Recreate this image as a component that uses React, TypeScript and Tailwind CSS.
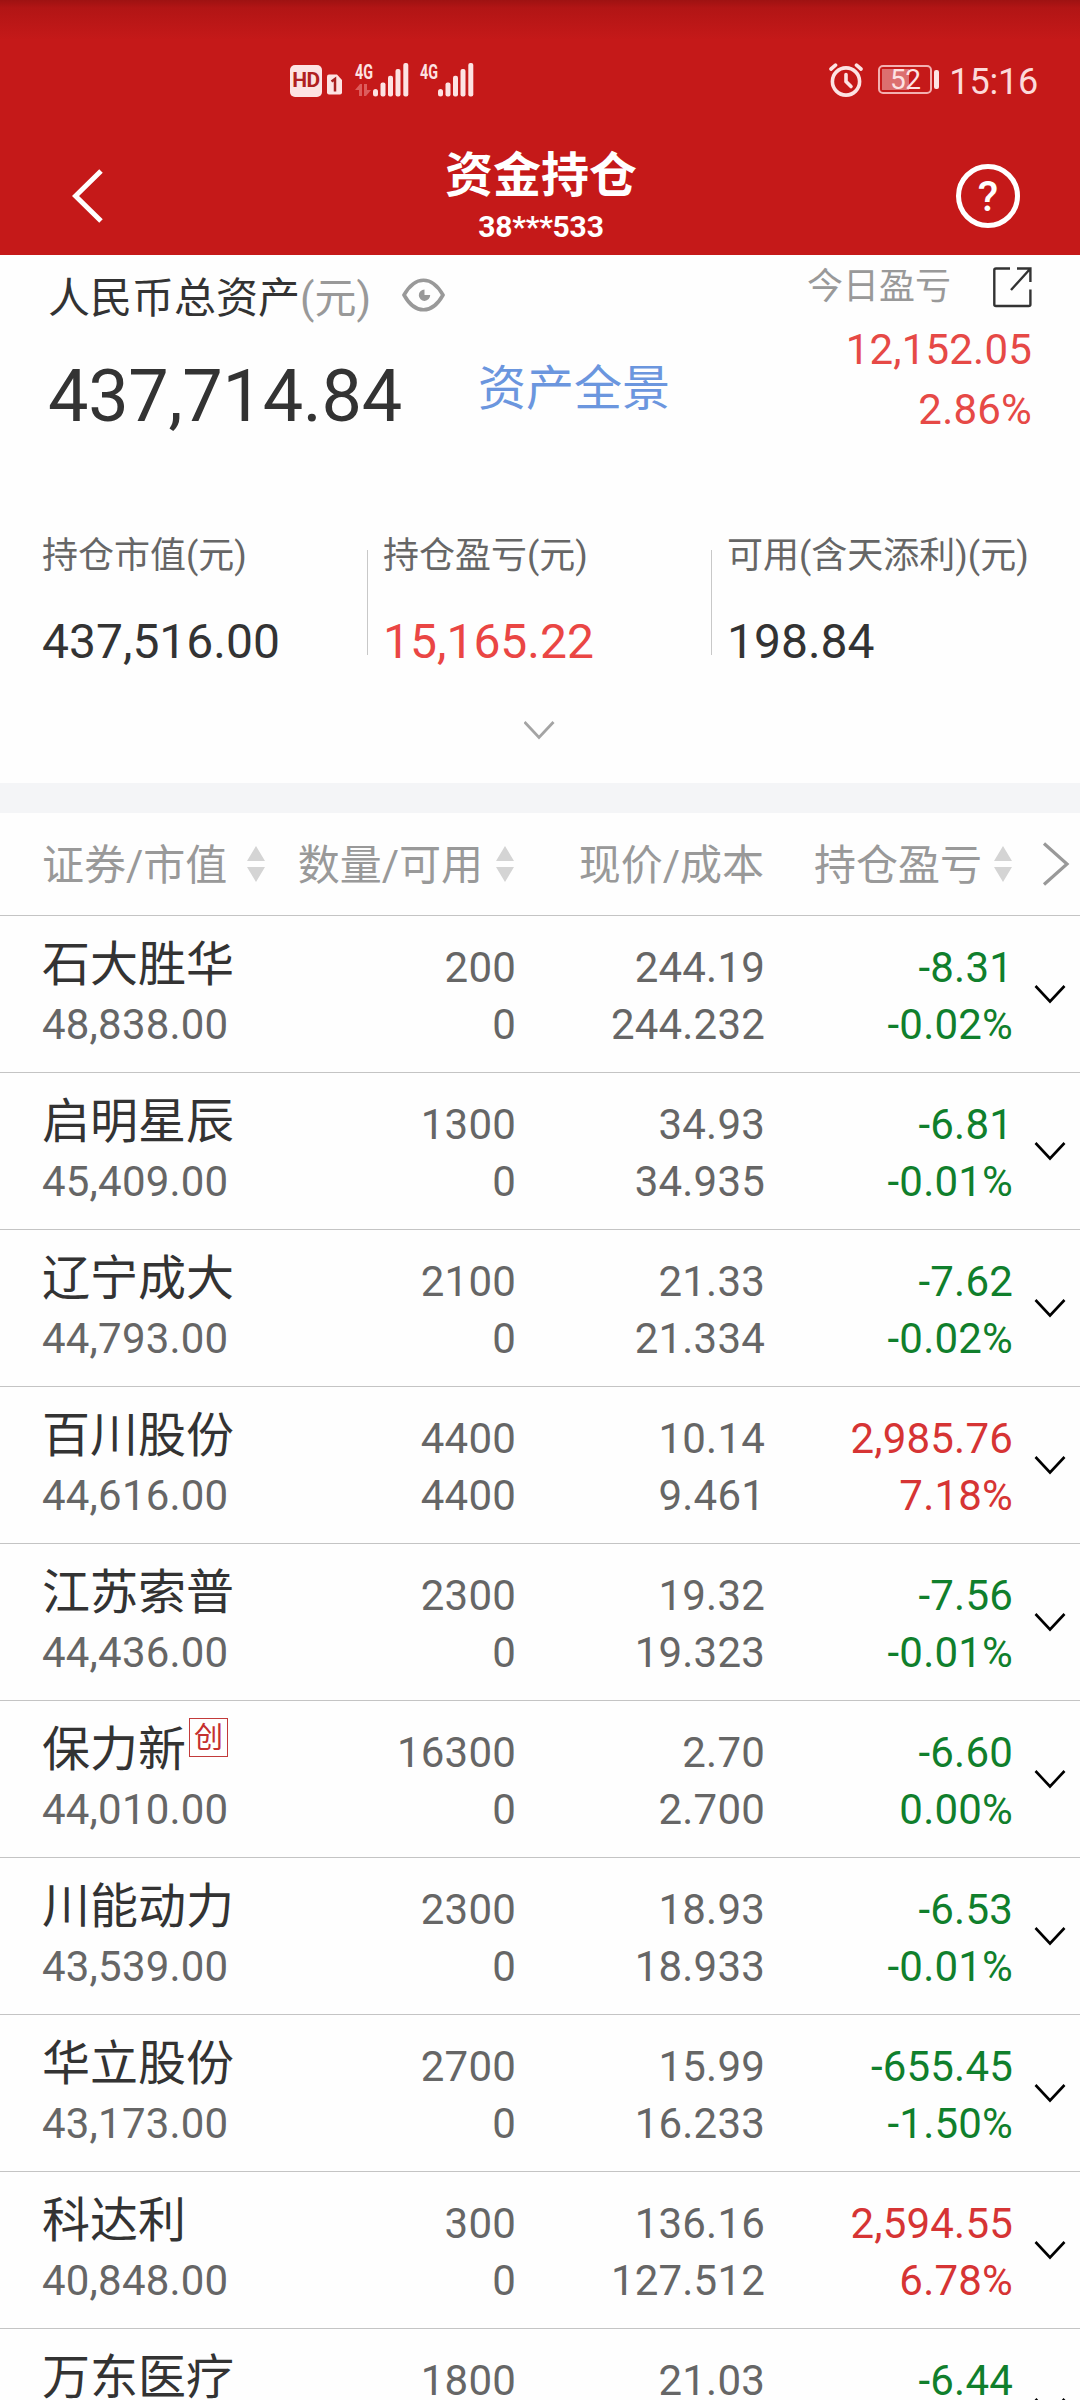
import type { ReactNode } from "react";

interface Holding {
  name: string;
  tag?: string;
  marketValue: string;
  quantity: string;
  available: string;
  price: string;
  cost: string;
  profit: string;
  profitRate: string;
  trend: "up" | "down";
}

const holdings: Holding[] = [
  { name: "石大胜华", marketValue: "48,838.00", quantity: "200", available: "0", price: "244.19", cost: "244.232", profit: "-8.31", profitRate: "-0.02%", trend: "down" },
  { name: "启明星辰", marketValue: "45,409.00", quantity: "1300", available: "0", price: "34.93", cost: "34.935", profit: "-6.81", profitRate: "-0.01%", trend: "down" },
  { name: "辽宁成大", marketValue: "44,793.00", quantity: "2100", available: "0", price: "21.33", cost: "21.334", profit: "-7.62", profitRate: "-0.02%", trend: "down" },
  { name: "百川股份", marketValue: "44,616.00", quantity: "4400", available: "4400", price: "10.14", cost: "9.461", profit: "2,985.76", profitRate: "7.18%", trend: "up" },
  { name: "江苏索普", marketValue: "44,436.00", quantity: "2300", available: "0", price: "19.32", cost: "19.323", profit: "-7.56", profitRate: "-0.01%", trend: "down" },
  { name: "保力新", tag: "创", marketValue: "44,010.00", quantity: "16300", available: "0", price: "2.70", cost: "2.700", profit: "-6.60", profitRate: "0.00%", trend: "down" },
  { name: "川能动力", marketValue: "43,539.00", quantity: "2300", available: "0", price: "18.93", cost: "18.933", profit: "-6.53", profitRate: "-0.01%", trend: "down" },
  { name: "华立股份", marketValue: "43,173.00", quantity: "2700", available: "0", price: "15.99", cost: "16.233", profit: "-655.45", profitRate: "-1.50%", trend: "down" },
  { name: "科达利", marketValue: "40,848.00", quantity: "300", available: "0", price: "136.16", cost: "127.512", profit: "2,594.55", profitRate: "6.78%", trend: "up" },
  { name: "万东医疗", marketValue: "", quantity: "1800", available: "", price: "21.03", cost: "", profit: "-6.44", profitRate: "", trend: "down" },
];

const SignalIcon = ({ showData }: { showData?: boolean }) => (
  <svg className="overflow-visible" width="54" height="40" viewBox="0 -6 54 40" fill="#fde3e3">
    <text x="0" y="15.5" fontSize="20.500" fontWeight="700" textLength="18" lengthAdjust="spacingAndGlyphs">
      4G
    </text>
    {showData && (
      <path d="M0 27L5 21H7V33H4V27ZM9 21H12V27H16L11 33H9Z" fill="#dd5c5c" />
    )}
    <rect x="18" y="26" width="5" height="7.5" rx="2.5" />
    <rect x="25.5" y="19.5" width="5" height="14" rx="2" />
    <rect x="33" y="12.7" width="5" height="20.8" rx="2" />
    <rect x="40.5" y="6" width="5" height="27.5" rx="2" />
    <rect x="48.3" y="0" width="5" height="33.5" rx="2" />
  </svg>
);

const StatusBar = () => (
  <div className="flex h-[97px] items-end justify-between pr-[42px] pl-[290px]">
    <div className="flex items-end">
      <div className="flex h-8 w-8 items-center justify-center rounded-[5px] bg-[#fde3e3] text-[21px] font-bold tracking-[-0.5px] text-[#b02020]">
        HD
      </div>
      <svg className="mb-[2px] ml-[5px]" width="15" height="21" viewBox="0 0 15 21">
        <path d="M2 0.500H10L15 6V18.500Q15 20.500 13 20.500H2Q0 20.500 0 18.500V2.500Q0 0.500 2 0.500Z" fill="#fde3e3" />
        <path d="M4.500 7.500L8 5V17.500" fill="none" stroke="#a82020" strokeWidth="2.500" />
      </svg>
      <div className="ml-[13px] flex gap-[11px]">
        <SignalIcon showData />
        <SignalIcon />
      </div>
    </div>
    <div className="flex items-end">
      <svg width="34" height="34" viewBox="0 0 34 34" fill="none" stroke="#fde3e3" strokeLinecap="round">
        <circle cx="17" cy="18.500" r="13.600" strokeWidth="3.600" />
        <path d="M2 6L6.500 2.200M32 6L27.500 2.200" strokeWidth="3.600" />
        <path d="M17 11.500V18.500L22 23.500" strokeWidth="3.600" />
      </svg>
      <div className="mb-[3px] ml-[15px] flex items-center gap-[2px]">
        <div className="relative flex h-[29px] w-[54px] items-center justify-center rounded-[5px] border-2 border-[#f3b0b0]">
          <div className="absolute top-[2px] left-[2px] h-[21px] w-[27px] bg-[#dc6f6f]" />
          <span className="relative text-[28px] leading-[25px] tracking-[-0.5px] text-[#fde3e3]">52</span>
        </div>
        <div className="h-[19px] w-[5px] rounded-[2px] bg-[#fde3e3]" />
      </div>
      <span className="mb-[-4px] ml-[10px] text-[36px] leading-[37px] tracking-[-0.2px] text-[#fcdada]">15:16</span>
    </div>
  </div>
);

const Header = () => (
  <header className="h-[255px] shrink-0 bg-[#c51919] bg-[linear-gradient(to_bottom,#9e1212_0px,#b21515_8px,#c51919_40px)] text-white">
    <StatusBar />
    <div className="flex h-[158px] items-start justify-between pr-[60px] pl-[72px]">
      <svg className="mt-[72px]" width="32" height="54" viewBox="0 0 32 54" fill="none" stroke="currentColor" strokeWidth="5">
        <path d="M29 2L3.500 27L29 52" />
      </svg>
      <div className="mt-[49px] ml-[22px] text-center font-bold">
        <h1 className="text-[48px] leading-[60px]">资金持仓</h1>
        <p className="mt-[3px] text-[30px] leading-[36px] tracking-[-0.2px]">38***533</p>
      </div>
      <div className="mt-[67px] flex h-16 w-16 items-center justify-center rounded-full border-[5px] border-white text-[42px] font-medium">
        ?
      </div>
    </div>
  </header>
);

const Summary = () => (
  <section className="h-[528px] shrink-0">
    <div className="flex h-[277px] justify-between pr-[48px] pl-[48px]">
      <div className="pt-[19px]">
        <div className="flex items-start">
          <span className="text-[42px] leading-[50px] text-[#333]">
            人民币总资产<span className="text-[#999]">(元)</span>
          </span>
          <svg className="mt-[4px] ml-[31px]" width="43" height="34" viewBox="0 0 43 34">
            <path d="M2 17C6.500 9 13 2.200 21.500 2.200S36.500 9 41 17C36.500 25 30 31.800 21.500 31.800S6.500 25 2 17Z" fill="none" stroke="#999" strokeWidth="3.600" />
            <path d="M22.500 17V11.500A5.700 5.700 0 1 0 28.200 17Z" fill="#999" />
          </svg>
        </div>
        <div className="mt-[33px] flex items-start">
          <span className="text-[72px] leading-[80px] tracking-[-0.3px] text-[#333]">437,714.84</span>
          <span className="mt-[2px] ml-[76px] text-[48px] leading-[60px] text-[#6b96de]">资产全景</span>
        </div>
      </div>
      <div className="pt-[11px] text-right">
        <div className="flex items-start justify-end">
          <span className="mt-px text-[36px] leading-10 text-[#999]">今日盈亏</span>
          <svg className="mt-px ml-[42px]" width="39" height="41" viewBox="0 0 39 41" fill="none" stroke="#333" strokeWidth="2.400">
            <path d="M17 1.500H3Q1.300 1.500 1.300 3V37.500Q1.300 39 3 39H35.700Q37.400 39 37.400 37.500V22.500" />
            <path d="M24 1.500H37.400V15M37 2L18 23" />
          </svg>
        </div>
        <div className="mt-[12px] text-[42px] leading-[60px] tracking-[0.2px] text-[#e64946]">
          <p>12,152.05</p>
          <p>2.86%</p>
        </div>
      </div>
    </div>
    <div className="flex">
      <SummaryItem label="持仓市值(元)" value="437,516.00" className="w-[367px] pl-[42px] text-[#333]" />
      <div className="mt-[18px] h-[105px] w-px bg-[#c8c8c8]" />
      <SummaryItem label="持仓盈亏(元)" value="15,165.22" className="w-[343px] pl-[15px] text-[#ea4644]" />
      <div className="mt-[18px] h-[105px] w-px bg-[#c8c8c8]" />
      <SummaryItem label="可用(含天添利)(元)" value="198.84" className="pl-[15px] text-[#333]" />
    </div>
    <svg className="mx-auto mt-[48px]" width="32" height="20" viewBox="0 0 32 20" fill="none" stroke="#a4a4a4" strokeWidth="2.800">
      <path d="M0.500 2L15 17.500L29.500 2" />
    </svg>
  </section>
);

const SummaryItem = ({ label, value, className }: { label: string; value: string; className: string }) => (
  <div className={`whitespace-nowrap ${className}`}>
    <p className="text-[36px] leading-[48px] text-[#666]">{label}</p>
    <p className="mt-[32px] text-[48px] leading-[60px]">{value}</p>
  </div>
);

const SortIcon = () => (
  <svg className="shrink-0" width="18" height="36" viewBox="0 0 18 36" fill="#d4d4d4">
    <path d="M9 0L18 15H0ZM9 36L18 21H0Z" />
  </svg>
);

const ColumnTitle = ({ children }: { children: ReactNode }) => (
  <span className="block pt-[3px] whitespace-nowrap">{children}</span>
);

const TableHead = () => (
  <div className="grid h-[102px] shrink-0 grid-cols-[265px_249px_250px_248px_68px] items-center text-[42px] text-[#999]">
    <div className="flex items-center justify-between pl-[42px]">
      <ColumnTitle>证券/市值</ColumnTitle>
      <SortIcon />
    </div>
    <div className="flex items-center justify-end gap-[13px]">
      <ColumnTitle>数量/可用</ColumnTitle>
      <SortIcon />
    </div>
    <div className="text-right">
      <ColumnTitle>现价/成本</ColumnTitle>
    </div>
    <div className="flex items-center justify-end gap-[12px]">
      <ColumnTitle>持仓盈亏</ColumnTitle>
      <SortIcon />
    </div>
    <svg className="ml-[30px]" width="28" height="44" viewBox="0 0 28 44" fill="none" stroke="#999" strokeWidth="3.200">
      <path d="M2 1.500L25 22L2 42.500" />
    </svg>
  </div>
);

const HoldingRow = ({ item }: { item: Holding }) => (
  <div className="grid h-[157px] shrink-0 grid-cols-[265px_251px_249px_248px_67px] border-t border-[#c4c4c4] text-[42px] leading-[57px] tracking-[0.2px] text-[#666]">
    <div className="pt-[23px] pl-[42px]">
      <div className="flex h-[57px] items-start text-[48px] leading-[51px] tracking-normal text-[#333]">
        {item.name}
        {item.tag && (
          <span className="mt-[-6px] ml-[3px] flex h-[39px] w-[39px] items-center justify-center border border-[#c23a3a] text-[29px] leading-[38px] text-[#c5302f]">
            {item.tag}
          </span>
        )}
      </div>
      <p>{item.marketValue}</p>
    </div>
    <div className="pt-[23px] text-right">
      <p>{item.quantity}</p>
      <p>{item.available}</p>
    </div>
    <div className="pt-[23px] text-right">
      <p>{item.price}</p>
      <p>{item.cost}</p>
    </div>
    <div className={`pt-[23px] text-right ${item.trend === "up" ? "text-[#d63434]" : "text-[#107f2c]"}`}>
      <p>{item.profit}</p>
      <p>{item.profitRate}</p>
    </div>
    <svg className="ml-[21px] self-center" width="32" height="20" viewBox="0 0 32 20" fill="none" stroke="#000" strokeWidth="2.600">
      <path d="M1.500 2L16 17.500L30.500 2" />
    </svg>
  </div>
);

export default function App() {
  return (
    <div className="flex h-[2400px] w-[1080px] flex-col overflow-hidden bg-[#fefefe] font-['Roboto','Noto_Sans_CJK_SC',sans-serif]">
      <Header />
      <Summary />
      <div className="h-[30px] shrink-0 bg-[#f4f5f7]" />
      <TableHead />
      {holdings.map((item) => (
        <HoldingRow key={item.name} item={item} />
      ))}
    </div>
  );
}
